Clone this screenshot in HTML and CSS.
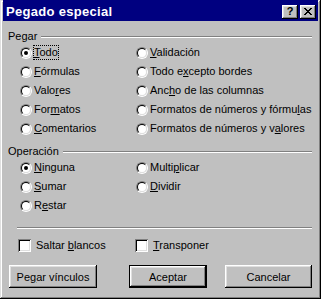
FILE: index.html
```html
<!DOCTYPE html>
<html>
<head>
    <title>Pegado especial</title>
    <link rel="stylesheet" href="styles.css">
</head>
<body>
    <!-- the dialog window -->
    <div class="window">
        <div class="titlebar">
            <span class="title">Pegado especial</span>
            <div class="title-buttons">
                <span class="tbtn help">?</span>
                <span class="tbtn close">
                    <svg width="8" height="7" viewBox="0 0 8 7" shape-rendering="crispEdges">
                        <path d="M0 0h2v1H0z M6 0h2v1H6z M1 1h2v1H1z M5 1h2v1H5z M2 2h4v1H2z M3 3h2v1H3z M2 4h4v1H2z M1 5h2v1H1z M5 5h2v1H5z M0 6h2v1H0z M6 6h2v1H6z" fill="#000"/>
                    </svg>
                </span>
            </div>
        </div>

        <div class="content">
            <!-- Pegar -->
            <div class="group-title"><span>Pegar</span><span class="etch"></span></div>
            <div class="options">
                <div class="opt"><span class="radio checked"></span><span class="text focus"><u>T</u>odo</span></div>
                <div class="opt"><span class="radio"></span><span class="text"><u>V</u>alidación</span></div>
                <div class="opt"><span class="radio"></span><span class="text"><u>F</u>órmulas</span></div>
                <div class="opt"><span class="radio"></span><span class="text">Todo e<u>x</u>cepto bordes</span></div>
                <div class="opt"><span class="radio"></span><span class="text">Valo<u>r</u>es</span></div>
                <div class="opt"><span class="radio"></span><span class="text">Anc<u>h</u>o de las columnas</span></div>
                <div class="opt"><span class="radio"></span><span class="text">For<u>m</u>atos</span></div>
                <div class="opt"><span class="radio"></span><span class="text">Formatos de números y fórmu<u>l</u>as</span></div>
                <div class="opt"><span class="radio"></span><span class="text"><u>C</u>omentarios</span></div>
                <div class="opt"><span class="radio"></span><span class="text">Formatos de números y v<u>a</u>lores</span></div>
            </div>

            <!-- Operación -->
            <div class="group-title op"><span>Operación</span><span class="etch"></span></div>
            <div class="options">
                <div class="opt"><span class="radio checked"></span><span class="text"><u>N</u>inguna</span></div>
                <div class="opt"><span class="radio"></span><span class="text">Multi<u>p</u>licar</span></div>
                <div class="opt"><span class="radio"></span><span class="text"><u>S</u>umar</span></div>
                <div class="opt"><span class="radio"></span><span class="text"><u>D</u>ividir</span></div>
                <div class="opt"><span class="radio"></span><span class="text">R<u>e</u>star</span></div>
            </div>

            <div class="separator"></div>

            <div class="checks">
                <div class="opt"><span class="checkbox"></span><span class="text">Saltar <u>b</u>lancos</span></div>
                <div class="opt"><span class="checkbox"></span><span class="text"><u>T</u>ransponer</span></div>
            </div>

            <div class="buttons">
                <span class="button links">Pe<u>g</u>ar vínculos</span>
                <span class="button ok default">Aceptar</span>
                <span class="button cancel">Cancelar</span>
            </div>
        </div>
    </div>
</body>
</html>
```

FILE: styles.css
```css
/* The page itself */
body {
    margin: 0;
    font-family: "Liberation Sans", Arial, sans-serif;
    font-size: 11px;
    color: #000;
}

/* Classic raised window frame */
.window {
    width: 321px;
    height: 299px;
    box-sizing: border-box;
    padding: 0 3px 3px 3px;
    background: #c0c0c0;
    box-shadow: inset -1px -1px #000, inset 1px 1px #dfdfdf,
                inset -2px -2px #808080, inset 2px 2px #fff;
}

/* Title bar */
.titlebar {
    height: 21px;
    box-sizing: border-box;
    padding: 2px 2px 0 3px;
    background: #000080;
    color: #fff;
    display: flex;
    align-items: center;
    justify-content: space-between;
}
.title {
    font-weight: bold;
    font-size: 13px;
    letter-spacing: 0.3px;
}
.title-buttons {
    display: flex;
    gap: 2px;
}
.tbtn {
    width: 16px;
    height: 14px;
    box-sizing: border-box;
    background: #c0c0c0;
    color: #000;
    display: flex;
    align-items: center;
    justify-content: center;
    font-weight: bold;
    font-size: 11px;
    line-height: 1;
    box-shadow: inset -1px -1px #000, inset 1px 1px #fff,
                inset -2px -2px #808080, inset 2px 2px #dfdfdf;
}
.tbtn svg {
    display: block;
}

/* Dialog content */
.content {
    padding: 9px 6px 0 5px;
}

/* Section headings with an etched line */
.group-title {
    height: 13px;
    line-height: 13px;
    display: flex;
    align-items: center;
    gap: 4px;
}
.group-title.op {
    margin-top: 7px;
}
.etch {
    flex: 1;
    border-top: 1px solid #808080;
    border-bottom: 1px solid #fff;
}

/* Radio option grid */
.options {
    display: grid;
    grid-template-columns: 116px auto;
    grid-auto-rows: 19px;
    margin-left: 12px;
}
.opt {
    display: flex;
    align-items: center;
    white-space: nowrap;
}
.text {
    margin-left: 1px;
    border: 1px dotted transparent;
    line-height: 13px;
}
.text.focus {
    border-color: #000;
}
u {
    text-underline-offset: 1px;
}

/* Sunken round radio button */
.radio {
    width: 12px;
    height: 12px;
    box-sizing: border-box;
    border-radius: 50%;
    border: 1px solid;
    border-color: #808080 #fff #fff #808080;
    position: relative;
    flex: none;
}
.radio::before {
    content: "";
    position: absolute;
    inset: 0;
    border-radius: 50%;
    border: 1px solid;
    border-color: #000 #dfdfdf #dfdfdf #000;
    background: #fff;
}
.radio.checked::after {
    content: "";
    position: absolute;
    left: 3px;
    top: 3px;
    width: 4px;
    height: 4px;
    border-radius: 50%;
    background: #000;
}

/* Separator above the checkboxes */
.separator {
    margin: 12px 0 0 9px;
    border-top: 1px solid #808080;
    border-bottom: 1px solid #fff;
}

/* Checkboxes */
.checks {
    display: grid;
    grid-template-columns: 117px auto;
    grid-auto-rows: 19px;
    margin: 7px 0 0 10px;
}
.checkbox {
    width: 13px;
    height: 13px;
    box-sizing: border-box;
    background: #fff;
    flex: none;
    margin-right: 3px;
    box-shadow: inset 1px 1px #808080, inset -1px -1px #fff,
                inset 2px 2px #000, inset -2px -2px #dfdfdf;
}

/* Push buttons */
.buttons {
    display: flex;
    margin: 10px 0 0 1px;
}
.button {
    height: 23px;
    box-sizing: border-box;
    display: flex;
    align-items: center;
    justify-content: center;
    background: #c0c0c0;
    box-shadow: inset -1px -1px #000, inset 1px 1px #fff,
                inset -2px -2px #808080, inset 2px 2px #dfdfdf;
}
.button.links {
    width: 88px;
}
.button.ok {
    width: 78px;
    margin-left: 32px;
}
.button.cancel {
    width: 87px;
    margin-left: 18px;
}
.button.default {
    box-shadow: inset 0 0 0 1px #000,
                inset -2px -2px #000, inset 2px 2px #fff,
                inset -3px -3px #808080, inset 3px 3px #dfdfdf;
}
```
